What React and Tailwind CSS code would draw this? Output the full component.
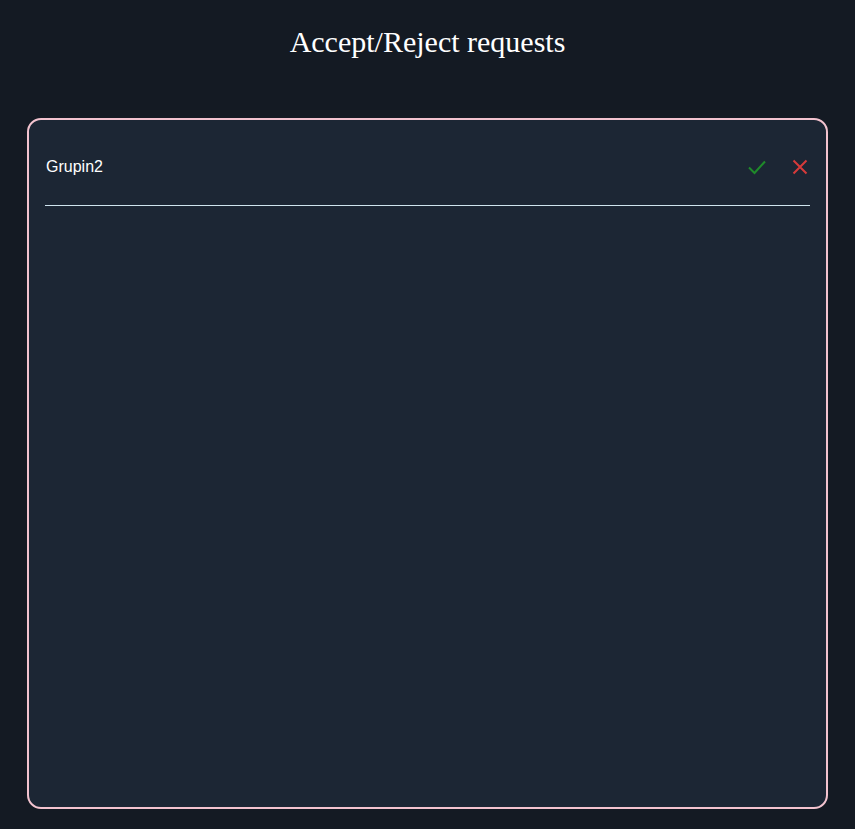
import React from 'react';

const requests = [{ id: 1, name: 'Grupin2' }];

function CheckIcon() {
  return (
    <svg width="20" height="20" viewBox="0 0 20 20" fill="none" stroke="#1f8a2a" strokeWidth="2">
      <path d="M2 10.5 L7.5 16 L18 4.5" />
    </svg>
  );
}

function XIcon() {
  return (
    <svg width="18" height="18" viewBox="0 0 18 18" fill="none" stroke="#d63a3a" strokeWidth="2">
      <path d="M2.5 2.5 L15.5 15.5 M15.5 2.5 L2.5 15.5" />
    </svg>
  );
}

export default function App() {
  return (
    <div className="min-h-screen bg-[#141a23] flex flex-col items-center pt-[23px] pb-[20px] px-[27px]">
      <h1 className="text-[30px] leading-[38px] text-white font-['Liberation_Serif',serif]">
        Accept/Reject requests
      </h1>

      <div className="mt-[57px] w-full h-[691px] bg-[#1c2634] border-2 border-[#f3c3cf] rounded-[14px] px-4 pt-4 font-['Liberation_Sans',sans-serif]">
        {requests.map(r => (
          <div
            key={r.id}
            className="flex items-center justify-between pt-[19px] pb-[26px] border-b border-[#cfe4ee]"
          >
            <span className="text-white text-[16px] leading-6 pl-px">{r.name}</span>
            <div className="flex items-center gap-[24px] pr-px">
              <button className="flex items-center"><CheckIcon /></button>
              <button className="flex items-center"><XIcon /></button>
            </div>
          </div>
        ))}
      </div>
    </div>
  );
}
